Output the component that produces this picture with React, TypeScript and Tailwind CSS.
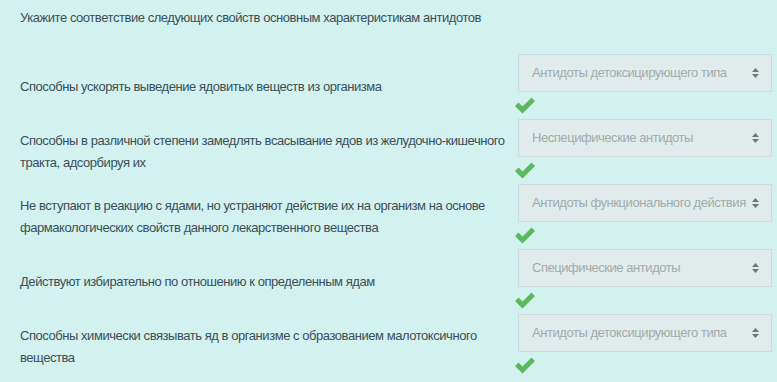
import React from "react";

const rows = [
  {
    text: "Способны ускорять выведение ядовитых веществ из организма",
    answer: "Антидоты детоксицирующего типа",
  },
  {
    text: "Способны в различной степени замедлять всасывание ядов из желудочно-кишечного тракта, адсорбируя их",
    answer: "Неспецифические антидоты",
  },
  {
    text: "Не вступают в реакцию с ядами, но устраняют действие их на организм на основе фармакологических свойств данного лекарственного вещества",
    answer: "Антидоты функционального действия",
  },
  {
    text: "Действуют избирательно по отношению к определенным ядам",
    answer: "Специфические антидоты",
  },
  {
    text: "Способны химически связывать яд в организме с образованием малотоксичного вещества",
    answer: "Антидоты детоксицирующего типа",
  },
];

function SortIcon() {
  return (
    <svg width="7" height="10" viewBox="0 0 7 10" className="shrink-0">
      <path d="M3.5 0 L7 4 H0 Z" fill="#6b7777" />
      <path d="M3.5 10 L7 6 H0 Z" fill="#6b7777" />
    </svg>
  );
}

function Check() {
  return (
    <svg width="22" height="17" viewBox="0 0 22 17">
      <path d="M1 9 L4.5 5.5 L8.5 9.5 L17.5 0.5 L21 4 L8.5 16.5 Z" fill="#5cb85c" />
    </svg>
  );
}

export default function App() {
  return (
    <div
      className="w-[777px] h-[382px] bg-[#d3f1ef] overflow-hidden text-[#3b4f58] tracking-[-0.45px]"
      style={{ fontFamily: '"Liberation Sans", Arial, sans-serif' }}
    >
      <div className="pl-5 pt-[8px] text-[13px] leading-[20px]">
        Укажите соответствие следующих свойств основным характеристикам антидотов
      </div>
      <div className="mt-[26px] flex flex-col">
        {rows.map((row, i) => (
          <div key={i} className="flex items-center h-[65px]">
            <div className="w-[510px] pl-5 text-[13px] leading-[22px]">{row.text}</div>
            <div className="flex flex-col h-[65px]">
              <div className="ml-[8px] w-[254px] h-[38px] bg-[#e1ebeb] border border-[#cbdcdc] flex items-center justify-between pl-[13px] pr-[12px] text-[13px] text-[#a0acac]">
                <span className="whitespace-nowrap">{row.answer}</span>
                <SortIcon />
              </div>
              <div className="ml-[4px] mt-[5px]">
                <Check />
              </div>
            </div>
          </div>
        ))}
      </div>
    </div>
  );
}
